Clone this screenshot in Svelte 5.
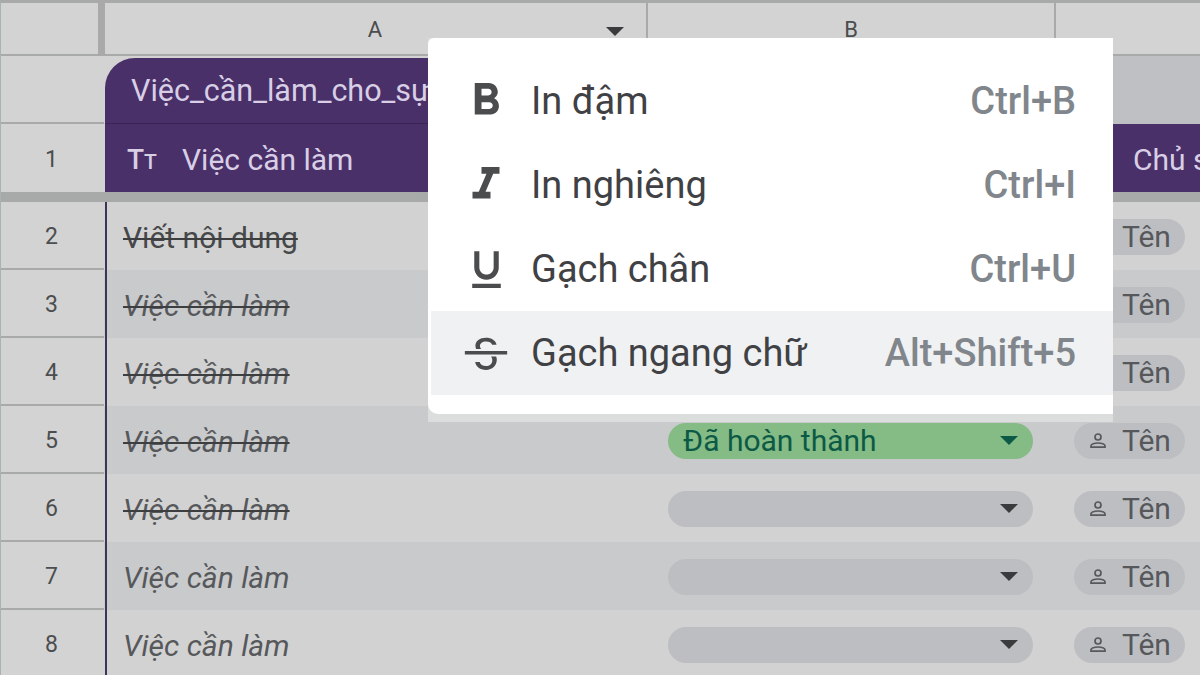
<script>
	// Rows below the frozen header
	const rows = [
		{ n: 2, title: 'Viết nội dung', done: true, plain: true },
		{ n: 3, title: 'Việc cần làm', done: true, alt: true },
		{ n: 4, title: 'Việc cần làm', done: true },
		{ n: 5, title: 'Việc cần làm', done: true, alt: true, status: 'Đã hoàn thành' },
		{ n: 6, title: 'Việc cần làm', done: true },
		{ n: 7, title: 'Việc cần làm', alt: true },
		{ n: 8, title: 'Việc cần làm' }
	];

	const menu = [
		{
			label: 'In đậm',
			keys: 'Ctrl+B',
			size: 54,
			path: 'M15.6 10.79c.97-.67 1.65-1.77 1.65-2.79 0-2.26-1.75-4-4-4H7v14h7.04c2.09 0 3.71-1.7 3.71-3.79 0-1.52-.86-2.82-2.15-3.42zM10 6.5h3c.83 0 1.5.67 1.5 1.5s-.67 1.5-1.5 1.5h-3v-3zm3.5 9H10v-3h3.5c.83 0 1.5.67 1.5 1.5s-.67 1.5-1.5 1.5z'
		},
		{
			label: 'In nghiêng',
			keys: 'Ctrl+I',
			size: 54,
			path: 'M10 4v3h2.21l-3.42 8H6v3h8v-3h-2.21l3.42-8H18V4z'
		},
		{
			label: 'Gạch chân',
			keys: 'Ctrl+U',
			size: 49,
			path: 'M12 17c3.31 0 6-2.69 6-6V3h-2.5v8c0 1.93-1.57 3.5-3.5 3.5S8.5 12.93 8.5 11V3H6v8c0 3.31 2.69 6 6 6zm-7 2v2h14v-2H5z'
		},
		{
			label: 'Gạch ngang chữ',
			keys: 'Alt+Shift+5',
			size: 54,
			path: 'M2.600 11.100h18.800v1.600H2.600zM7.600 10.200C7.400 9.700 7.300 9.300 7.300 8.800 7.300 6.600 9.300 5.200 12 5.200c2.500 0 4.300 1.200 4.700 3.100h-2C14.400 7.400 13.400 6.900 12 6.900c-1.600 0-2.700.8-2.700 2 0 .5.200.9.500 1.300zM14.200 13.600h2.300c.2.400.3.900.3 1.400 0 2.600-2 4.500-4.800 4.500-2.600 0-4.500-1.400-4.800-3.500h2c.3 1.100 1.300 1.800 2.800 1.800 1.600 0 2.800-1 2.800-2.600 0-.6-.2-1.200-.6-1.600z',
			active: true
		}
	];
</script>

<div class="sheet">
	<div class="row col-head">
		<div class="corner"></div>
		<div class="letter">
			<span>A</span>
			<i class="caret head-caret"></i>
		</div>
		<div class="letter"><span>B</span></div>
		<div class="letter last"></div>
	</div>

	<div class="row name-row">
		<div class="num"></div>
		<div class="table-tab">Việc_cần_làm_cho_sự</div>
		<div class="name-rest"></div>
		<div class="name-rest"></div>
	</div>

	<div class="row title-row">
		<div class="num">1</div>
		<div class="title-cell first"><span class="tt">T<small>T</small></span>Việc cần làm</div>
		<div class="title-cell"></div>
		<div class="title-cell owner">Chủ sở hữu</div>
	</div>

	<div class="frozen"></div>

	{#each rows as r}
		<div class="row data-row" class:alt={r.alt}>
			<div class="num">{r.n}</div>
			<div class="task" class:done={r.done} class:plain={r.plain}><span>{r.title}</span></div>
			<div class="status-cell">
				<div class="pill" class:green={r.status}>
					<span>{r.status ?? ''}</span>
					<i class="caret"></i>
				</div>
			</div>
			<div class="owner-cell">
				<div class="person">
					<svg viewBox="0 0 24 24" width="24" height="24">
						<circle cx="12" cy="8" r="3" fill="none" stroke="currentColor" stroke-width="1.7" />
						<path d="M5 18.200v-1.500c0-1.500 3.500-2.700 7-2.700s7 1.200 7 2.700v1.500z" fill="none" stroke="currentColor" stroke-width="1.700" />
					</svg>
					<span>Tên</span>
				</div>
			</div>
		</div>
	{/each}

	<div class="menu">
		<div class="panel">
			{#each menu as m}
				<div class="item" class:active={m.active}>
					<span class="icon">
						<svg viewBox="0 0 24 24" width={m.size} height={m.size}><path d={m.path} fill="#4a4c4e" /></svg>
					</span>
					<span class="label">{m.label}</span>
					<span class="keys">{m.keys}</span>
				</div>
			{/each}
		</div>
	</div>
</div>

<style>
	:global(body) {
		margin: 0;
		overflow: hidden;
		background: #d2d2d2;
	}

	.sheet {
		position: relative;
		width: 1200px;
		height: 675px;
		overflow: hidden;
		box-sizing: border-box;
		border-top: 3px solid #a8a9a9;
		border-left: 1px solid #a9b3b0;
		font-family: Roboto, 'Liberation Sans', sans-serif;
		color: #4b4d4f;
	}

	.row {
		display: grid;
		grid-template-columns: 103px 544px 408px 144px;
	}

	.col-head {
		height: 53px;
		background: #d3d3d3;
	}

	.corner {
		background: #d3d3d3;
		border-right: 7px solid #a8a9a9;
		border-bottom: 2px solid #a8a9a9;
		margin-right: -1px;
	}

	.letter {
		position: relative;
		display: flex;
		align-items: center;
		justify-content: center;
		font-size: 22px;
		padding-top: 2px;
		box-sizing: border-box;
		border-right: 2px solid #a8a9a9;
		border-bottom: 2px solid #a8a9a9;
	}

	.letter.last {
		border-right: 0;
	}

	.head-caret {
		position: absolute;
		left: 502px;
		top: 24px;
	}

	.name-row {
		height: 68px;
		background: #d3d3d3;
	}

	.num {
		display: flex;
		align-items: center;
		justify-content: center;
		box-sizing: border-box;
		font-size: 23px;
		color: #4b4d4f;
		background: #d3d3d3;
		border-bottom: 2px solid #a8a9a9;
		padding: 2px 2px 0 0;
	}

	.table-tab {
		display: flex;
		align-items: center;
		margin: 2px 0 0 1px;
		padding-left: 26px;
		background: #4a3069;
		color: #d8cfe6;
		font-size: 30.500px;
		white-space: nowrap;
		overflow: hidden;
		border-radius: 30px 0 0 0;
		border-bottom: 1px solid #3a2455;
		box-sizing: border-box;
	}

	.name-rest {
		background: #bfc0c3;
	}

	.title-row {
		height: 68px;
	}

	.title-row .num {
		border-bottom: 0;
	}

	.title-cell {
		display: flex;
		align-items: center;
		padding: 2px 0 0 22px;
		background: #4a3069;
		color: #d8cfe6;
		font-size: 30px;
		white-space: nowrap;
		overflow: hidden;
	}

	.title-cell.first {
		margin-left: 1px;
	}

	.title-cell.owner {
		padding-left: 77px;
	}

	.tt {
		width: 55px;
		font-size: 28px;
		font-weight: 500;
	}

	.tt small {
		font-size: 21px;
	}

	.frozen {
		height: 10px;
		background: #a8a9a9;
	}

	.data-row {
		height: 68px;
		background: #d2d2d2;
	}

	.data-row.alt {
		background: #c9cacc;
	}

	.task {
		display: flex;
		align-items: center;
		padding: 2px 0 0 16px;
		font-size: 30px;
		font-style: italic;
		color: #56585b;
		border-left: 2px solid #3c3459;
		margin-left: 1px;
	}

	.task.plain {
		font-style: normal;
		color: #46484a;
	}

	.task.done span {
		text-decoration: line-through;
		text-decoration-color: #3c3e40;
		text-decoration-thickness: 2px;
	}

	.status-cell {
		padding: 17px 23px 15px 20px;
		box-sizing: border-box;
	}

	.pill {
		display: flex;
		align-items: center;
		justify-content: space-between;
		height: 36px;
		padding: 0 15px 1px;
		border-radius: 18px;
		background: #bdbec2;
		font-size: 30px;
		color: #0c5a46;
		box-sizing: border-box;
	}

	.pill.green {
		background: #85bb85;
	}

	.pill.green .caret {
		border-top-color: #0c5a46;
	}

	.caret {
		display: block;
		width: 0;
		height: 0;
		border-left: 9px solid transparent;
		border-right: 9px solid transparent;
		border-top: 9px solid #3a3b3d;
	}

	.owner-cell {
		padding: 17px 0 15px 18px;
		box-sizing: border-box;
	}

	.person {
		display: flex;
		align-items: center;
		gap: 12px;
		width: 111px;
		height: 36px;
		padding: 0 0 1px 12px;
		box-sizing: border-box;
		border-radius: 18px;
		background: #bdbec2;
		font-size: 30px;
		color: #56585b;
	}

	.menu {
		position: absolute;
		left: 427px;
		top: 35px;
		width: 685px;
		height: 384px;
		background: #dcdddd;
	}

	.panel {
		height: 376px;
		box-sizing: border-box;
		padding: 21px 0 0 3px;
		background: #fff;
		border-radius: 6px 0 0 10px;
	}

	.item {
		display: flex;
		align-items: center;
		height: 84px;
		padding-right: 37px;
		font-size: 38px;
		color: #3f4144;
	}

	.item.active {
		background: #f0f1f3;
	}

	.icon {
		display: flex;
		justify-content: center;
		box-sizing: border-box;
		width: 100px;
		padding-left: 10px;
		flex: none;
	}

	.label {
		flex: 1;
		white-space: nowrap;
	}

	.keys {
		color: #80868b;
		font-weight: 500;
		white-space: nowrap;
	}
</style>
